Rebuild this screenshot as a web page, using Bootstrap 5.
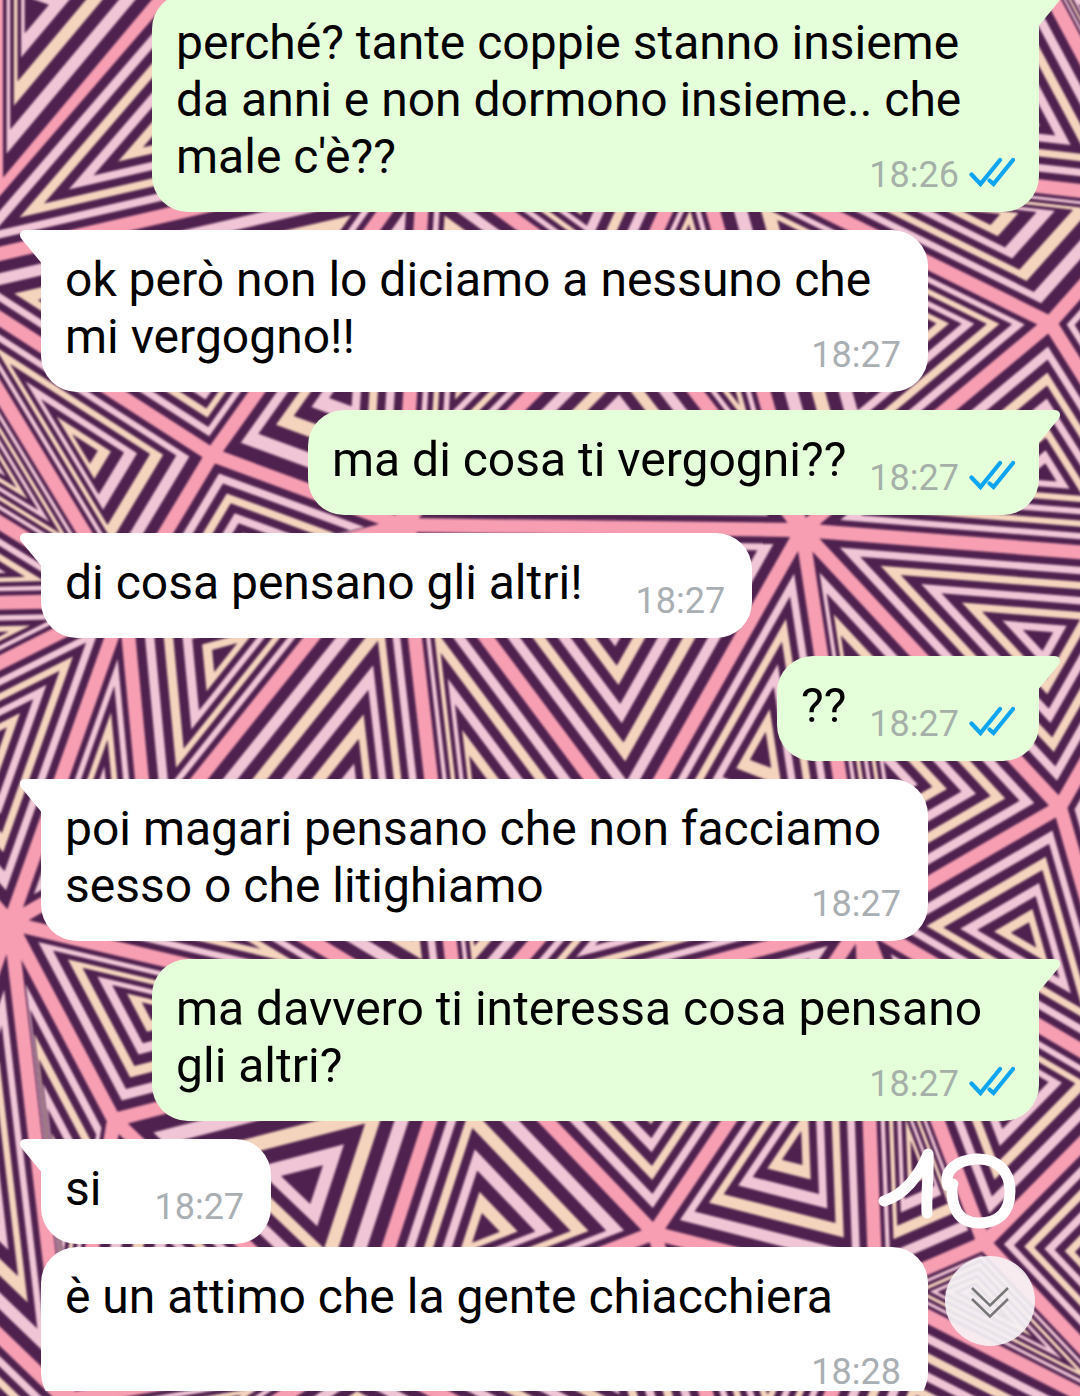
<!DOCTYPE html>
<html lang="it">
<head>
<meta charset="utf-8">
<meta name="viewport" content="width=device-width, initial-scale=1">
<title>Chat</title>
<link href="https://cdn.jsdelivr.net/npm/bootstrap@5.3.0/dist/css/bootstrap.min.css" rel="stylesheet">
<style>
  body { background: #f79eb2; font-family: Roboto, "Liberation Sans", sans-serif; color: #000; overflow: hidden; }
  .wallpaper { z-index: -1; }
  .soft { filter: blur(1px); }
  .thread { height: calc(100vh - 5px); padding: 0 41px; }
  .thread-inner { margin-top: -7px; }
  .bubble { max-width: calc(100% - 111px); padding: 21px 24px 27px; border-radius: 36px; font-size: 48px; line-height: 57px; margin-bottom: 18px; }
  .bubble.joined { margin-bottom: 3px; }
  .bubble-in { background: #fff; }
  .bubble-out { background: #e5ffdb; }
  .bubble-in.tailed { border-top-left-radius: 0; }
  .bubble-out.tailed { border-top-right-radius: 0; }
  .bubble-body { display: flow-root; }
  .tail { top: 0; width: 22px; height: 34px; }
  .bubble-in .tail { left: -21px; fill: #fff; }
  .bubble-out .tail { right: -21px; fill: #e5ffdb; }
  .stamp { margin: 26px 3px -11px 53px; gap: 10px; font-size: 36px; line-height: 42px; color: #a9afb2; }
  .bubble-out .stamp { margin-left: 23px; margin-right: 0; color: #a5b0a8; }
  .ticks { width: 46px; height: 39px; }
  .jump { right: 45px; bottom: 50px; width: 90px; height: 90px; background: rgba(246, 243, 246, .91); }
  .doodle { right: 60px; bottom: 160px; width: 145px; height: 95px; }
</style>
<script src="https://cdn.jsdelivr.net/npm/bootstrap@5.3.0/dist/js/bootstrap.bundle.min.js"></script>
</head>
<body>
<svg class="wallpaper position-fixed top-0 start-0 w-100 h-100" viewBox="0 0 1080 1396" preserveAspectRatio="xMinYMin slice" aria-hidden="true"><g class="soft" id="wallpaper"></g></svg>

<svg class="d-none" aria-hidden="true">
  <symbol id="tail-in" viewBox="0 0 22 34"><path d="M22 0H6C0 0-2 5 2 9.500L21 32.500L22 34Z"/></symbol>
  <symbol id="tail-out" viewBox="0 0 22 34"><path d="M0 0H16C22 0 24 5 20 9.500L1 32.500L0 34Z"/></symbol>
  <symbol id="read" viewBox="0 0 46 39"><path d="M2.500 17.500L11.500 27L31 3M20.500 23.500L24.500 27L44 3" fill="none" stroke="#0ca6f0" stroke-width="4.200" stroke-linecap="round"/></symbol>
</svg>

<main class="thread overflow-hidden">
  <div class="thread-inner d-flex flex-column align-items-start">
    <div class="bubble bubble-out tailed position-relative align-self-end">
      <svg class="tail position-absolute"><use href="#tail-out"/></svg>
      <div class="bubble-body">
        perché? tante coppie stanno insieme da anni e non dormono insieme.. che male c'è??
        <div class="stamp float-end d-flex align-items-end"><time>18:26</time><svg class="ticks" role="img" aria-label="Letto"><use href="#read"/></svg></div>
      </div>
    </div>
    <div class="bubble bubble-in tailed position-relative">
      <svg class="tail position-absolute"><use href="#tail-in"/></svg>
      <div class="bubble-body">
        ok però non lo diciamo a nessuno che mi vergogno!!
        <div class="stamp float-end"><time>18:27</time></div>
      </div>
    </div>
    <div class="bubble bubble-out tailed position-relative align-self-end">
      <svg class="tail position-absolute"><use href="#tail-out"/></svg>
      <div class="bubble-body">
        ma di cosa ti vergogni??
        <div class="stamp float-end d-flex align-items-end"><time>18:27</time><svg class="ticks" role="img" aria-label="Letto"><use href="#read"/></svg></div>
      </div>
    </div>
    <div class="bubble bubble-in tailed position-relative">
      <svg class="tail position-absolute"><use href="#tail-in"/></svg>
      <div class="bubble-body">
        di cosa pensano gli altri!
        <div class="stamp float-end"><time>18:27</time></div>
      </div>
    </div>
    <div class="bubble bubble-out tailed position-relative align-self-end">
      <svg class="tail position-absolute"><use href="#tail-out"/></svg>
      <div class="bubble-body">
        ??
        <div class="stamp float-end d-flex align-items-end"><time>18:27</time><svg class="ticks" role="img" aria-label="Letto"><use href="#read"/></svg></div>
      </div>
    </div>
    <div class="bubble bubble-in tailed position-relative">
      <svg class="tail position-absolute"><use href="#tail-in"/></svg>
      <div class="bubble-body">
        poi magari pensano che non facciamo sesso o che litighiamo
        <div class="stamp float-end"><time>18:27</time></div>
      </div>
    </div>
    <div class="bubble bubble-out tailed position-relative align-self-end">
      <svg class="tail position-absolute"><use href="#tail-out"/></svg>
      <div class="bubble-body">
        ma davvero ti interessa cosa pensano gli altri?
        <div class="stamp float-end d-flex align-items-end"><time>18:27</time><svg class="ticks" role="img" aria-label="Letto"><use href="#read"/></svg></div>
      </div>
    </div>
    <div class="bubble bubble-in tailed joined position-relative">
      <svg class="tail position-absolute"><use href="#tail-in"/></svg>
      <div class="bubble-body">
        si
        <div class="stamp float-end"><time>18:27</time></div>
      </div>
    </div>
    <div class="bubble bubble-in position-relative">
      <div class="bubble-body">
        è un attimo che la gente chiacchiera
        <div class="stamp float-end"><time>18:28</time></div>
      </div>
    </div>
  </div>
</main>

<svg class="doodle position-fixed" viewBox="875 1141 145 95" role="img" aria-label="10" fill="none" stroke="#fff" stroke-width="11" stroke-linecap="round" stroke-linejoin="round">
  <path d="M884 1201C904 1195 919 1176 928 1154C929 1174 926 1194 927 1213"/>
  <path d="M953 1184L948 1186C943 1170 958 1160 976 1159C998 1158 1010 1172 1010 1191C1010 1213 998 1223 979 1223C957 1223 951 1206 952 1184"/>
</svg>

<button type="button" class="jump position-fixed rounded-circle border-0 p-0 d-flex align-items-center justify-content-center" aria-label="Vai in fondo">
  <svg width="40" height="36" viewBox="0 0 40 36" fill="none" stroke="#777" stroke-width="2.500"><path d="M2 5L20 22.500L38 5M2 16L20 33.500L38 16"/></svg>
</button>

<script>
  // Wallpaper: a mesh of triangles between shared hubs, each filled with nested stripes.
  const hub = {
    W: [-74, 271], T: [200, -47], V: [-4, -120], v: [-4, 197], Q: [425, 155], A: [212, 455], J: [125, 600],
    X: [-150, 430], Y: [-150, 606], Z: [-150, 738], E: [10, 923], N: [148, 843], I: [402, 525],
    B: [802, 530], C: [1050, 323], D: [1060, 807], L: [631, 832], M: [862, 922], O: [460, 1030],
    F: [114, 1120], G: [654, 1233], K: [876, 1290], H: [984, 1243], S: [66, 1400], U: [355, 1350],
    P: [-100, 1240], R: [1140, 1085], r: [1170, 1440], c: [1200, 562], t: [695, 147], h: [625, 300],
    d: [1160, 200], e: [1000, -100], f: [1250, -40], b: [760, 1560], a: [-60, 1620], g: [500, -150]
  };
  // Hubs, then the heart of the stripes and the number of dark rings where they are set.
  const mesh = [
    ['VvT', [28, 12], 4], ['WTQ', [165, 135], 5], ['WQA', [200, 345], 6], ['WAJ', [86, 450], 5],
    ['WXJ', [-15, 455], 6], ['XYJ', [-30, 565], 4], ['YZJ', [-10, 637], 3], ['ZJE', [-5, 740], 5],
    ['JEN', null, 4], ['JNI', [221, 655], 5], ['AJI', [250, 552], 5], ['AQI', [345, 390], 4],
    ['QIh', [480, 340], 6], ['Qht', [570, 195], 5], ['IhB', [615, 460], 5], ['hBt', null, 5],
    ['tBC', [900, 323], 6], ['Ctd', [984, 215], 5], ['tde', [980, 90], 6], ['edf', [1110, 50], 5],
    ['TQg', null, 6], ['Qgt', null, 6], ['gte', null, 6],
    ['Cdc', [1130, 330], 5], ['CBc', [1045, 475], 6], ['BcD', [1041, 638], 6], ['DcR', [1130, 820], 5],
    ['BDM', [890, 780], 6], ['BLM', [762, 752], 5], ['ILB', [612, 610], 6], ['ILO', [490, 830], 6],
    ['INO', [345, 810], 6], ['ENO', null, 4], ['EFO', [155, 1010], 5], ['EFS', [60, 1180], 5],
    ['EPS', [-10, 1200], 4], ['PSa', [-20, 1440], 6], ['FUS', [190, 1290], 5], ['FOU', [304, 1184], 4],
    ['OUG', [484, 1232], 5], ['OMG', [650, 1070], 6], ['LMO', null, 5], ['MGK', [795, 1152], 5],
    ['MKH', [915, 1160], 5], ['MHR', [1010, 1080], 5], ['MDR', [1026, 934], 5], ['HRr', [1084, 1253], 5],
    ['HKr', null, 6], ['Krb', [930, 1430], 6], ['GKb', null, 6], ['GUb', null, 6], ['USa', null, 6], ['Uab', null, 6]
  ];
  const DARK = '#4f214f', LIGHT = ['#f0c6d6', '#f4d4bd'], HALF_GAP = 7;

  const dist = (p, q) => Math.hypot(p[0] - q[0], p[1] - q[1]);
  function incircle([p, q, r]) {
    const a = dist(q, r), b = dist(p, r), c = dist(p, q), s = a + b + c;
    const area = Math.abs((q[0] - p[0]) * (r[1] - p[1]) - (r[0] - p[0]) * (q[1] - p[1])) / 2;
    return { at: [0, 1].map(i => (a * p[i] + b * q[i] + c * r[i]) / s), radius: 2 * area / s };
  }
  const scale = (tri, at, k) => tri.map(p => [0, 1].map(i => at[i] + (p[i] - at[i]) * k));
  let shapes = '';
  for (const [names, heart, rings] of mesh) {
    const tri = [...names].map(n => hub[n]);
    const circle = incircle(tri);
    const outer = scale(tri, circle.at, 1 - HALF_GAP / circle.radius);
    const steps = 2 * rings - 1;
    for (let k = 0; k < steps; k++) {
      const pts = scale(outer, heart || circle.at, 1 - k / (steps - .1));
      const fill = k % 2 ? LIGHT[(k >> 1) % 2] : DARK;
      shapes += `<polygon points="${pts.map(p => p.map(v => v.toFixed(1)).join()).join(' ')}" fill="${fill}"/>`;
    }
  }
  document.getElementById('wallpaper').innerHTML = '<rect x="-200" y="-200" width="1500" height="1900" fill="#f79eb2"/>' + shapes;
</script>
</body>
</html>
